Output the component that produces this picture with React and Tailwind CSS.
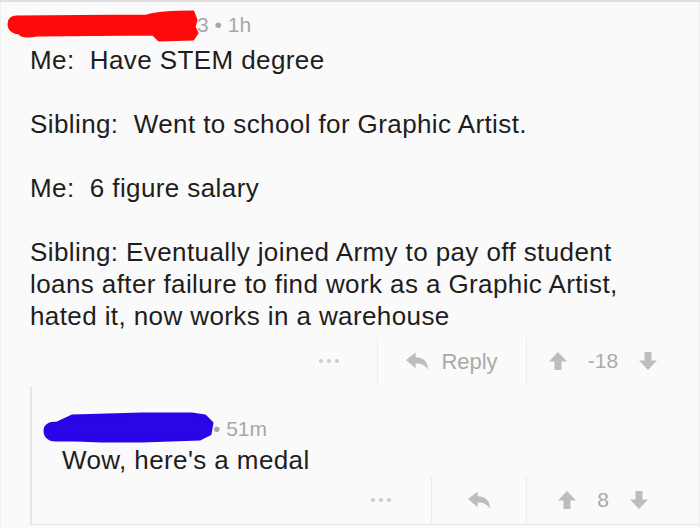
import React from 'react';

const font = { fontFamily: '"Liberation Sans", Arial, sans-serif' };

const ReplyIcon = ({ className }) => (
  <svg viewBox="0 0 24 18" className={className} fill="currentColor">
    <path d="M0,8 L10,0 L10,5 C18,5 23,9.5 23,18 C20,13 15.5,11.5 10,11.5 L10,16.5 Z" />
  </svg>
);

const UpIcon = ({ className }) => (
  <svg viewBox="0 0 20 20" className={className} fill="currentColor">
    <path d="M10,1 L19,10.5 L13.5,10.5 L13.5,19 L6.5,19 L6.5,10.5 L1,10.5 Z" />
  </svg>
);

const DownIcon = ({ className }) => (
  <svg viewBox="0 0 20 20" className={className} fill="currentColor">
    <path d="M10,19 L19,9.5 L13.5,9.5 L13.5,1 L6.5,1 L6.5,9.5 L1,9.5 Z" />
  </svg>
);

const Dots = () => (
  <div className="flex gap-[4px]">
    <span className="w-[4px] h-[4px] rounded-full bg-[#cccccc]" />
    <span className="w-[4px] h-[4px] rounded-full bg-[#cccccc]" />
    <span className="w-[4px] h-[4px] rounded-full bg-[#cccccc]" />
  </div>
);

const ActionBar = ({ dotsW, replyW, label, score, height }) => (
  <div className={`flex justify-end ${height}`}>
    <div className={`${dotsW} flex items-center justify-center`}>
      <Dots />
    </div>
    <div className={`${replyW} border-l border-[#ececec] flex items-center justify-center gap-3 text-[#aaaaaa]`}>
      <ReplyIcon className="w-[23px] h-[18px] text-[#bdbdbd]" />
      {label && <span className="text-[22px]">{label}</span>}
    </div>
    <div className="w-[173px] pr-[20px] border-l border-[#ececec] flex items-center justify-center gap-[20px] text-[#aaaaaa]">
      <UpIcon className="w-[20px] h-[20px] text-[#bdbdbd]" />
      <span className="text-[21px]">{score}</span>
      <DownIcon className="w-[20px] h-[20px] text-[#bdbdbd]" />
    </div>
  </div>
);

export default function App() {
  return (
    <div
      className="w-[700px] h-[528px] bg-[#fafafa] border-t-2 border-[#e0e0e0] overflow-hidden"
      style={font}
    >
      <div className="h-full border-l border-r border-[#efefef]">
        {/* Parent comment */}
        <div className="relative h-[42px] pt-[4px] pl-[196px] flex items-center text-[21px] text-[#a8a8a8]">
          <svg
            viewBox="0 0 195 36"
            className="absolute left-[6px] top-[8px] w-[195px] h-[36px]"
          >
            <path
              d="M2,14 C2,9 5,7 10,7 L140,6 C150,3 170,2 186,2 L189,10 L187,17 L190,23 L186,29 L152,30 L146,24 L30,25 C20,27 13,26 13,23 C6,23 2,19 2,14 Z"
              fill="#ff0a0a"
              stroke="#ff0a0a"
              strokeWidth="3"
              strokeLinejoin="round"
            />
          </svg>
          <span className="relative">3 • 1h</span>
        </div>

        <div className="pl-[29px] text-[26px] leading-[32px] tracking-[0.4px] text-[#1e1e1e] space-y-8 whitespace-pre">
          <p>Me:  Have STEM degree</p>
          <p>Sibling:  Went to school for Graphic Artist.</p>
          <p>Me:  6 figure salary</p>
          <p>
            Sibling: Eventually joined Army to pay off student
            <br />
            loans after failure to find work as a Graphic Artist,
            <br />
            hated it, now works in a warehouse
          </p>
        </div>

        <div className="mt-[5px]">
          <ActionBar dotsW="w-[96px]" replyW="w-[149px]" label="Reply" score="-18" height="h-[48px]" />
        </div>

        {/* Reply comment */}
        <div className="mt-[2px] ml-[29px] h-[138px] border-l-2 border-b border-[#e6e6e6]">
          <div className="relative h-[54px] pt-[29px] pl-[181px] flex items-center text-[21px] text-[#a8a8a8]">
            <svg
              viewBox="0 0 175 35"
              className="absolute left-[10px] top-[22px] w-[175px] h-[35px]"
            >
              <path
                d="M3,22 C3,16 8,14 15,14 L30,7 L100,5 L150,5 L163,7 L170,14 L168,25 L158,30 L100,32 L60,32 L33,31 L13,31 C7,31 3,27 3,22 Z"
                fill="#2a05e6"
                stroke="#2a05e6"
                strokeWidth="3"
                strokeLinejoin="round"
              />
            </svg>
            <span className="relative">• 51m</span>
          </div>
          <p className="mt-[3px] pl-[30px] text-[26px] leading-[32px] tracking-[0.4px] text-[#1e1e1e]">
            Wow, here's a medal
          </p>
          <ActionBar dotsW="w-[100px]" replyW="w-[95px]" score="8" height="h-[48px]" />
        </div>
      </div>
    </div>
  );
}
